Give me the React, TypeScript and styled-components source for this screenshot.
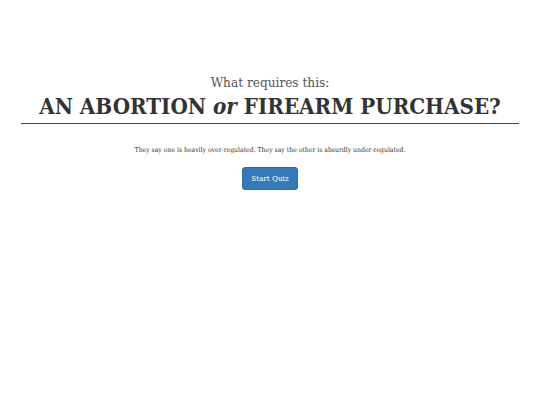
import styled, { createGlobalStyle } from "styled-components";

const GlobalStyle = createGlobalStyle`
  body {
    margin: 0;
    background: #fff;
    font-family: "DejaVu Serif", "Liberation Serif", serif;
    color: #333;
  }
`;

const Page = styled.div`
  padding: 72px 21px 0;
  text-align: center;
`;

const Header = styled.header`
  border-bottom: 1px solid #444;
  padding-bottom: 3px;
`;

const Lead = styled.div`
  font-size: 13.5px;
  line-height: 20px;
  color: #555;
  font-stretch: condensed;
`;

const Title = styled.h1`
  margin: 0;
  font-size: 22.2px;
  line-height: 28px;
  font-weight: 700;
  font-stretch: condensed;
  color: #333;
  white-space: nowrap;

  em {
    font-style: italic;
  }
`;

const Blurb = styled.p`
  margin: 21px 0 11px;
  font-size: 6.8px;
  line-height: 10px;
  font-stretch: condensed;
  color: #333;
`;

const StartButton = styled.button`
  font-family: inherit;
  font-size: 8px;
  font-stretch: condensed;
  color: #fff;
  background: #337ab7;
  border: 1px solid #2e6da4;
  border-radius: 3px;
  padding: 0 8px;
  height: 23px;
  white-space: nowrap;
  cursor: pointer;
`;

export default function App() {
  return (
    <>
      <GlobalStyle />
      <Page>
        <Header>
          <Lead>What requires this:</Lead>
          <Title>
            AN ABORTION <em>or</em> FIREARM PURCHASE?
          </Title>
        </Header>
        <Blurb>
          They say one is heavily over-regulated. They say the other is absurdly under-regulated.
        </Blurb>
        <StartButton>Start Quiz</StartButton>
      </Page>
    </>
  );
}
